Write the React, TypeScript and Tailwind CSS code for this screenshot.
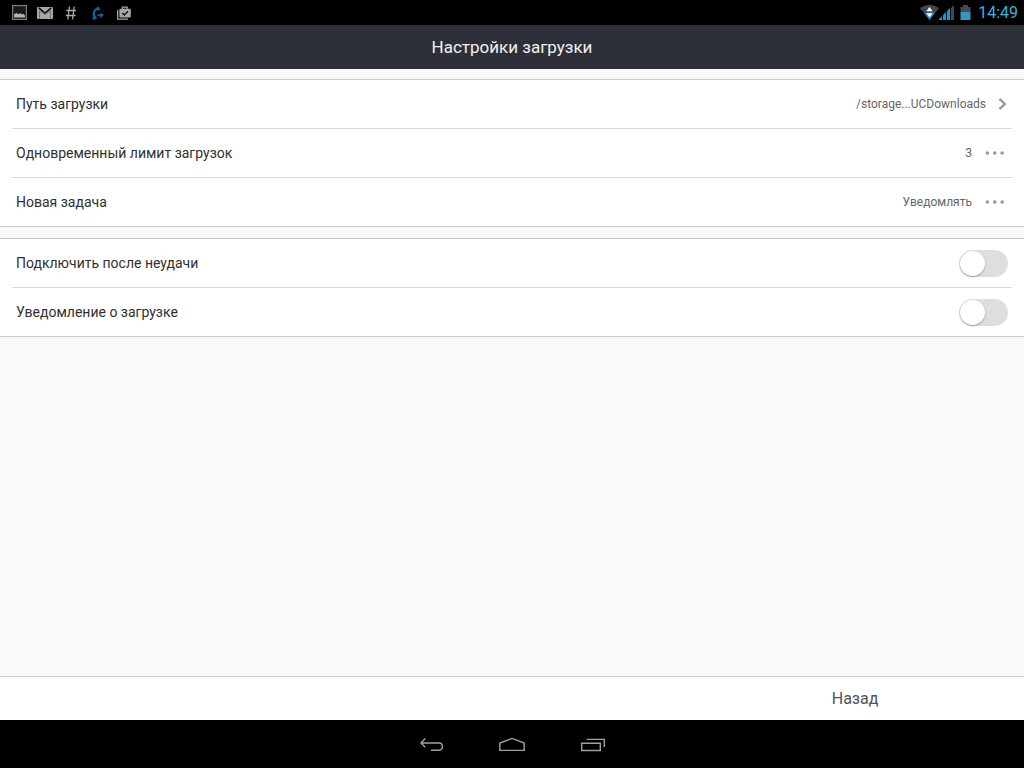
import React, { useState } from 'react';

interface SettingRowProps {
  label: string;
  value: string;
  icon: 'chevron' | 'dots';
}

const Chevron = () => (
  <svg width="10" height="14" viewBox="0 0 10 14" fill="none" stroke="#9b9b9b" strokeWidth="2.4">
    <path d="M1.4 1.8 6.8 7l-5.4 5.2" />
  </svg>
);

const Dots = () => (
  <svg width="20" height="4" viewBox="0 0 20 4" fill="#999">
    <circle cx="3.4" cy="2" r="1.8" />
    <circle cx="10.8" cy="2" r="1.8" />
    <circle cx="18.2" cy="2" r="1.8" />
  </svg>
);

const SettingRow: React.FC<SettingRowProps> = ({ label, value, icon }) => (
  <li>
    <button className="flex h-12 w-full items-center justify-between px-1 text-left">
      <span className="text-sm text-[#303030]">{label}</span>
      <span className={icon === 'chevron' ? 'flex items-center gap-3 text-xs text-[#666666]' : 'flex items-center gap-3 pr-1 text-xs text-[#666666]'}>
        {value}
        {icon === 'chevron' ? <Chevron /> : <Dots />}
      </span>
    </button>
  </li>
);

const SwitchRow: React.FC<{ label: string }> = ({ label }) => {
  const [on, setOn] = useState(false);

  return (
    <li>
      <label className="flex h-12 items-center justify-between px-1">
        <span className="text-sm text-[#303030]">{label}</span>
        <input
          type="checkbox"
          role="switch"
          checked={on}
          onChange={() => setOn(!on)}
          className="flex h-[27px] w-[49px] appearance-none items-center rounded-full bg-[#dedede] px-px before:block before:size-[25px] before:rounded-full before:bg-white before:shadow-[0_1px_2px_rgba(0,0,0,0.3)] before:content-[''] checked:justify-end checked:bg-[#33a0e8]"
        />
      </label>
    </li>
  );
};

const Section: React.FC<{ children: React.ReactNode }> = ({ children }) => (
  <section className="border-y border-[#c9c9c9] bg-white px-3">
    <ul className="divide-y divide-[#d9d9d9]">{children}</ul>
  </section>
);

const StatusBar = () => (
  <div className="flex h-[25px] items-center justify-between bg-black pr-[6px] pl-3">
    <div className="flex items-center gap-[10px]">
      {/* Picture */}
      <svg width="15" height="15" viewBox="0 0 15 15">
        <rect x="0.6" y="0.6" width="13.8" height="13.8" fill="#181818" stroke="#7d7d7d" strokeWidth="1.2" />
        <path d="M2 12.5V9.6L4.4 7.8l1.6 1.4L8 8.2l2 1.2 1.4-.6L13 10.4v2.1z" fill="#b4b4b4" />
      </svg>
      {/* Mail */}
      <svg width="16" height="12" viewBox="0 0 16 12">
        <rect width="16" height="12" rx="1" fill="#a8a8a8" />
        <path d="M2.6 12V3.4L8 7.8l5.4-4.4V12" fill="none" stroke="#555" strokeWidth="0.7" />
        <path d="M1.8 0.8 8 6l6.2-5.2" fill="none" stroke="#111" strokeWidth="1.6" />
      </svg>
      {/* Hash */}
      <svg width="16" height="14" viewBox="0 0 16 14" fill="none" stroke="#a8a8a8" strokeWidth="1.3">
        <path d="M6.5 0.5 4.8 13.5M11.2 0.5 9.5 13.5M3.2 4.5H13M2.8 9.5h9.8" />
      </svg>
      {/* Outgoing call */}
      <svg width="16" height="14" viewBox="0 0 16 14" fill="none" stroke="#06689f">
        <path d="M9.6 2.4C5.4 3 3.6 6.8 5.4 11.4" strokeWidth="2.2" />
        <path d="M8.6 1 10 4.2M3.8 12.8 7.4 11" strokeWidth="2.8" />
        <path d="M8.6 9.3h3.4" strokeWidth="1.8" />
        <path d="M11.4 6.4 14.8 9.3l-3.4 2.9z" fill="#06689f" stroke="none" />
      </svg>
      {/* Store */}
      <svg width="16" height="14" viewBox="0 0 16 14">
        <path d="M2.7 4v9.2H13" fill="none" stroke="#a8a8a8" strokeWidth="1.3" />
        <path d="M7.5 3V1.2h4.6V3" fill="none" stroke="#a8a8a8" strokeWidth="1.3" />
        <rect x="4.4" y="2.8" width="11.4" height="8.6" rx="0.8" fill="#a8a8a8" />
        <path d="m7.3 7 2 2 3.6-3.8" fill="none" stroke="#111" strokeWidth="1.4" />
      </svg>
    </div>

    <div className="flex items-center">
      {/* Wi-Fi */}
      <svg width="19" height="15" viewBox="0 0 19 15">
        <path d="M0 3.2C5.5-1 13.5-1 19 3.2L9.5 15z" fill="#454545" />
        <path d="M4.4 8.6C7.5 6.8 11.5 6.8 14.6 8.6L9.5 15z" fill="#1388bd" />
        <path d="m9.5 2 3.2 4.2H6.3zM9.5 12.4l3.2-4.2H6.3z" fill="#fff" />
      </svg>
      {/* Mobile signal */}
      <svg width="16" height="15" viewBox="0 0 16 15" fill="#0b9be8">
        <path d="M0 15v-1l3-3v4zM4 15v-5l3-3v8zM8 15V6l3-3v12z" />
        <path d="M12 15V3l3-3v15z" fill="#484848" />
      </svg>
      {/* Battery */}
      <svg className="ml-[5px]" width="11" height="15" viewBox="0 0 11 15">
        <path d="M3 0h5v2h2.5v5.5H0.5V2H3z" fill="#4a4a4a" />
        <rect x="0.5" y="7" width="10" height="8" fill="#3198c0" />
      </svg>
      <time className="ml-[7px] text-base text-[#33b5e5]">14:49</time>
    </div>
  </div>
);

const NavigationBar = () => (
  <nav className="flex h-12 items-center justify-center gap-[54px] bg-black">
    <button aria-label="Back">
      <svg width="26" height="18" viewBox="0 0 26 18" fill="none" stroke="#a0a0a0" strokeWidth="1.4">
        <path d="M3 8h18c4.5 0 4.5 7.2 0 7.2h-8M7.2 3.6 3 8l4.2 4.2" />
      </svg>
    </button>
    <button aria-label="Home">
      <svg width="28" height="18" viewBox="0 0 28 18" fill="none" stroke="#a0a0a0" strokeWidth="1.4">
        <path d="M1.8 15.4V8L14 3.4 26.2 8v7.4z" />
      </svg>
    </button>
    <button aria-label="Recent apps">
      <svg width="26" height="18" viewBox="0 0 26 18" fill="none" stroke="#a0a0a0" strokeWidth="1.4">
        <path d="M1.7 8.2h18.6v7.3H1.7zM6.5 4.4h17.8v7.6" />
      </svg>
    </button>
  </nav>
);

const App = () => {
  return (
    <div className="flex min-h-screen flex-col bg-[#f9f9f9] font-[Roboto,sans-serif]">
      <StatusBar />
      <header className="flex h-11 items-center justify-center bg-[#2d3039]">
        <h1 className="text-[17px] leading-6 text-[#f0f0f0]">Настройки загрузки</h1>
      </header>

      <main className="flex flex-1 flex-col gap-[11px] pt-[10px]">
        <Section>
          <SettingRow label="Путь загрузки" value="/storage...UCDownloads" icon="chevron" />
          <SettingRow label="Одновременный лимит загрузок" value="3" icon="dots" />
          <SettingRow label="Новая задача" value="Уведомлять" icon="dots" />
        </Section>
        <Section>
          <SwitchRow label="Подключить после неудачи" />
          <SwitchRow label="Уведомление о загрузке" />
        </Section>
      </main>

      <footer className="flex justify-end border-t border-[#d0d0d0] bg-white">
        <button className="h-[43px] w-[33%] text-base text-[#50565c]">Назад</button>
      </footer>
      <NavigationBar />
    </div>
  );
};

export default App;
